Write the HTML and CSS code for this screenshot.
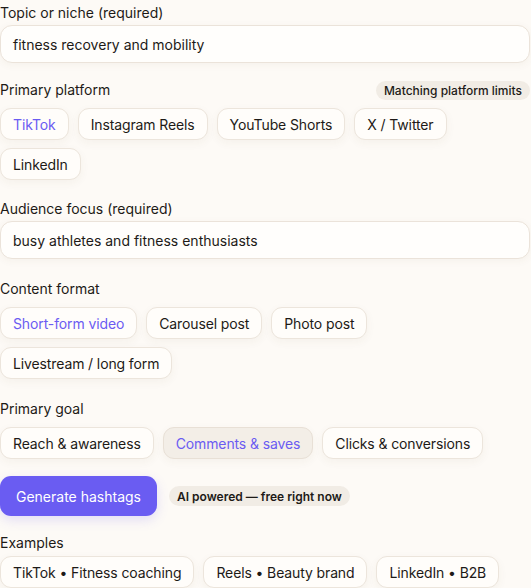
FILE: index.html
```html
<!DOCTYPE html>
<html lang="en">
<head>
<meta charset="utf-8">
<title>Hashtag generator</title>
<link rel="stylesheet" href="styles.css">
</head>
<body>
<main class="form">
  <section class="field field-first">
    <label class="label label-input">Topic or niche (required)</label>
    <div class="input">fitness recovery and mobility</div>
  </section>

  <section class="field field-platform">
    <div class="label-row">
      <span class="label">Primary platform</span>
      <span class="badge">Matching platform limits</span>
    </div>
    <div class="chips">
      <button class="chip chip-active">TikTok</button>
      <button class="chip">Instagram Reels</button>
      <button class="chip">YouTube Shorts</button>
      <button class="chip">X / Twitter</button>
      <button class="chip">LinkedIn</button>
    </div>
  </section>

  <section class="field field-audience">
    <label class="label label-input">Audience focus (required)</label>
    <div class="input">busy athletes and fitness enthusiasts</div>
  </section>

  <section class="field field-format">
    <div class="label label-chips">Content format</div>
    <div class="chips">
      <button class="chip chip-active">Short-form video</button>
      <button class="chip">Carousel post</button>
      <button class="chip">Photo post</button>
      <button class="chip">Livestream / long form</button>
    </div>
  </section>

  <section class="field field-goal">
    <div class="label label-chips">Primary goal</div>
    <div class="chips">
      <button class="chip">Reach &amp; awareness</button>
      <button class="chip chip-active chip-filled">Comments &amp; saves</button>
      <button class="chip">Clicks &amp; conversions</button>
    </div>
  </section>

  <section class="actions">
    <button class="primary">Generate hashtags</button>
    <span class="badge badge-strong">AI powered — free right now</span>
  </section>

  <section class="field field-examples">
    <div class="label label-examples">Examples</div>
    <div class="chips">
      <button class="chip">TikTok • Fitness coaching</button>
      <button class="chip">Reels • Beauty brand</button>
      <button class="chip">LinkedIn • B2B</button>
    </div>
  </section>
</main>
</body>
</html>
```

FILE: styles.css
```css
* { box-sizing: border-box; }

html, body {
  margin: 0;
  padding: 0;
  background: #fdfaf6;
}

body {
  font-family: Inter, "Noto Sans", "Liberation Sans", sans-serif;
  font-size: 14px;
  color: #1d1a17;
  overflow: hidden;
}

.form {
  width: 531px;
  padding: 3px 1px 0 0;
}

.label {
  display: block;
  font-size: 14px;
  line-height: 20px;
  color: #1d1a17;
}

.label-input { margin-bottom: 2px; }
.label-chips { margin-bottom: 8px; }
.label-examples { margin-bottom: 3px; }

.field-platform { margin-top: 17px; }
.field-audience { margin-top: 19px; }
.field-format { margin-top: 20px; }
.field-goal { margin-top: 20px; }
.field-examples { margin-top: 17px; }

.label-row {
  display: flex;
  align-items: center;
  justify-content: space-between;
  height: 20px;
  margin-bottom: 8px;
}

.input {
  height: 38px;
  display: flex;
  align-items: center;
  padding: 0 12px;
  background: #fffefc;
  border: 1px solid #ebe3da;
  border-radius: 12px;
  box-shadow: 0 2px 8px rgba(90, 70, 40, 0.05);
  font-size: 14px;
  color: #1d1a17;
}

.chips {
  display: flex;
  flex-wrap: wrap;
  gap: 8px 9px;
}

.chip {
  height: 32px;
  padding: 0 12px;
  font-family: inherit;
  font-size: 14px;
  letter-spacing: -0.12px;
  color: #1d1a17;
  background: #fffdfa;
  border: 1px solid #ece5dc;
  border-radius: 11px;
  box-shadow: 0 3px 10px rgba(90, 70, 40, 0.05);
  cursor: pointer;
  white-space: nowrap;
}

.chip-active { color: #6b5cf2; }

.chip-filled {
  background: #f3eee7;
  border-color: #e8e0d6;
}

.badge {
  display: inline-flex;
  align-items: center;
  height: 19px;
  padding: 0 8px;
  font-size: 12px;
  font-weight: 500;
  color: #1d1a17;
  background: #f1ece5;
  border-radius: 10px;
  white-space: nowrap;
}

.badge-strong {
  font-weight: 600;
  height: 20px;
  padding: 0 8px;
}

.actions {
  display: flex;
  align-items: center;
  gap: 12px;
  margin-top: 17px;
}

.primary {
  height: 40px;
  width: 157px;
  padding: 0;
  font-family: inherit;
  font-size: 14px;
  color: #ffffff;
  background: #6a5cf2;
  border: none;
  border-radius: 11px;
  box-shadow: 0 4px 12px rgba(106, 92, 242, 0.18);
  cursor: pointer;
}
```
